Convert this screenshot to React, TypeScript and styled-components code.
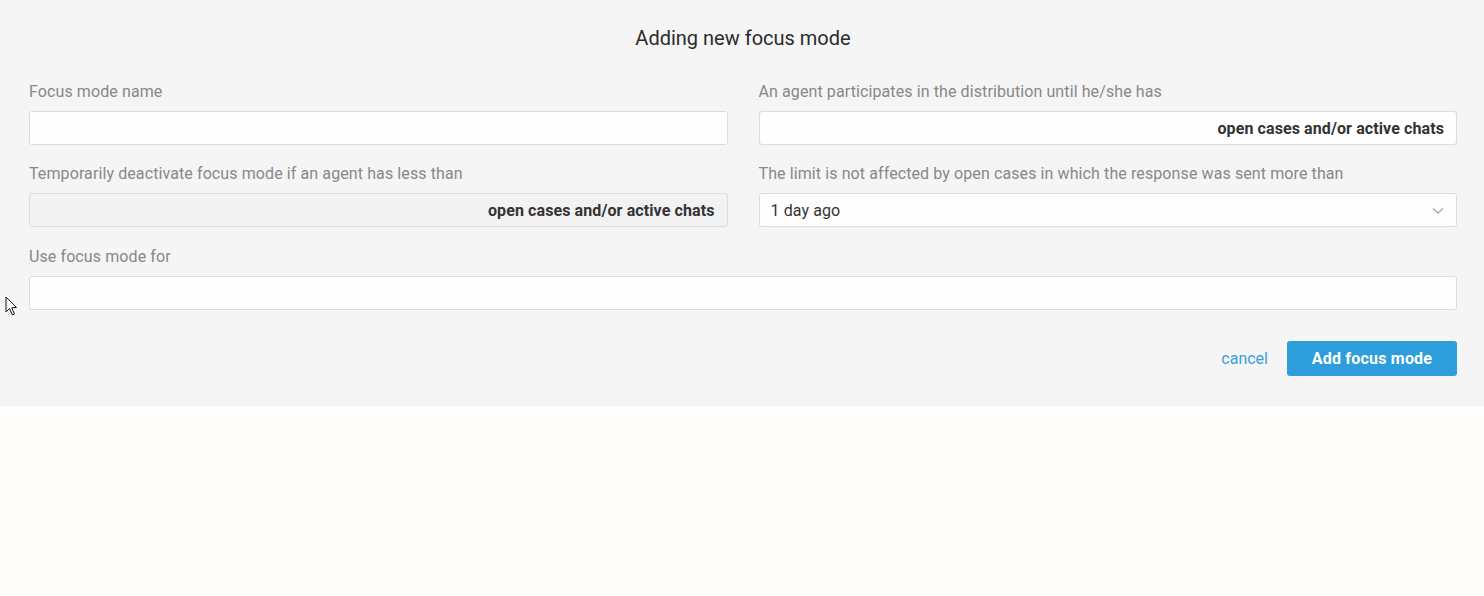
import React from 'react';
import styled, { createGlobalStyle } from 'styled-components';

const GlobalStyle = createGlobalStyle`
    html, body {
        margin: 0;
        padding: 0;
        background-color: #fefdfb;
        font-family: Roboto, "Liberation Sans", sans-serif;
    }
`

const Panel = styled.div`
    background-color: #f5f5f5;
    height: 406px;
    box-sizing: border-box;
    padding: 26px 27px 0 29px;
    position: relative;
`

const Title = styled.h2`
    margin: 0 0 32px 0;
    text-align: center;
    font-size: 20px;
    font-weight: 400;
    color: #2b2b2b;
    line-height: 24px;
`

const Grid = styled.div`
    display: grid;
    grid-template-columns: 1fr 1fr;
    column-gap: 31px;
    row-gap: 19px;
`

const Field = styled.div<{ wide?: boolean }>`
    display: flex;
    flex-direction: column;
    gap: 9px;
    grid-column: ${props => props.wide ? '1 / span 2' : 'auto'};
    margin-top: ${props => props.wide ? '1px' : '0'};
`

const Label = styled.label`
    font-size: 16px;
    letter-spacing: 0.1px;
    line-height: 20px;
    color: #888;
`

const Input = styled.div<{ disabled?: boolean }>`
    height: 34px;
    box-sizing: border-box;
    border: 1px solid #dcdcdc;
    border-radius: 3px;
    background-color: ${props => props.disabled ? '#f2f2f2' : '#fefefe'};
    display: flex;
    align-items: center;
    justify-content: flex-end;
    padding: 0 12px;
    font-size: 16px;
    letter-spacing: 0.1px;
    font-weight: 700;
    color: #333;
`

const Select = styled.div`
    height: 34px;
    box-sizing: border-box;
    border: 1px solid #dcdcdc;
    border-radius: 3px;
    background-color: #fefefe;
    display: flex;
    align-items: center;
    justify-content: space-between;
    padding: 1px 12px 0 11px;
    font-size: 16px;
    letter-spacing: 0.1px;
    color: #333;
`

const Actions = styled.div`
    display: flex;
    justify-content: flex-end;
    align-items: center;
    gap: 19px;
    margin-top: 31px;
`

const CancelLink = styled.span`
    color: #3aa0db;
    font-size: 16px;
    cursor: pointer;
`

const PrimaryButton = styled.button`
    width: 170px;
    height: 35px;
    border: none;
    border-radius: 3px;
    background-color: #2d9ddc;
    color: #fff;
    font-family: Roboto, "Liberation Sans", sans-serif;
    font-size: 16px;
    letter-spacing: 0.2px;
    font-weight: 700;
    cursor: pointer;
`

const Cursor = styled.svg`
    position: absolute;
    left: 5px;
    top: 296px;
`

const App = () => {
    return (
        <>
        <GlobalStyle />
        <Panel>
            <Title>Adding new focus mode</Title>
            <Grid>
                <Field>
                    <Label>Focus mode name</Label>
                    <Input />
                </Field>
                <Field>
                    <Label>An agent participates in the distribution until he/she has</Label>
                    <Input>open cases and/or active chats</Input>
                </Field>
                <Field>
                    <Label>Temporarily deactivate focus mode if an agent has less than</Label>
                    <Input disabled>open cases and/or active chats</Input>
                </Field>
                <Field>
                    <Label>The limit is not affected by open cases in which the response was sent more than</Label>
                    <Select>
                        <span>1 day ago</span>
                        <svg width="12" height="8" viewBox="0 0 12 8">
                            <path d="M1 1.5 L6 6 L11 1.5" fill="none" stroke="#aaa" strokeWidth="1.4" />
                        </svg>
                    </Select>
                </Field>
                <Field wide>
                    <Label>Use focus mode for</Label>
                    <Input />
                </Field>
            </Grid>
            <Actions>
                <CancelLink>cancel</CancelLink>
                <PrimaryButton>Add focus mode</PrimaryButton>
            </Actions>
            <Cursor width="14" height="22" viewBox="0 0 14 22">
                <path d="M1 1 L1 16 L4.5 12.5 L7.5 19 L9.5 18 L6.7 11.8 L11.5 11.5 Z" fill="#fff" stroke="#111" strokeWidth="1" strokeLinejoin="round" />
            </Cursor>
        </Panel>
        </>
    )
}

export default App
